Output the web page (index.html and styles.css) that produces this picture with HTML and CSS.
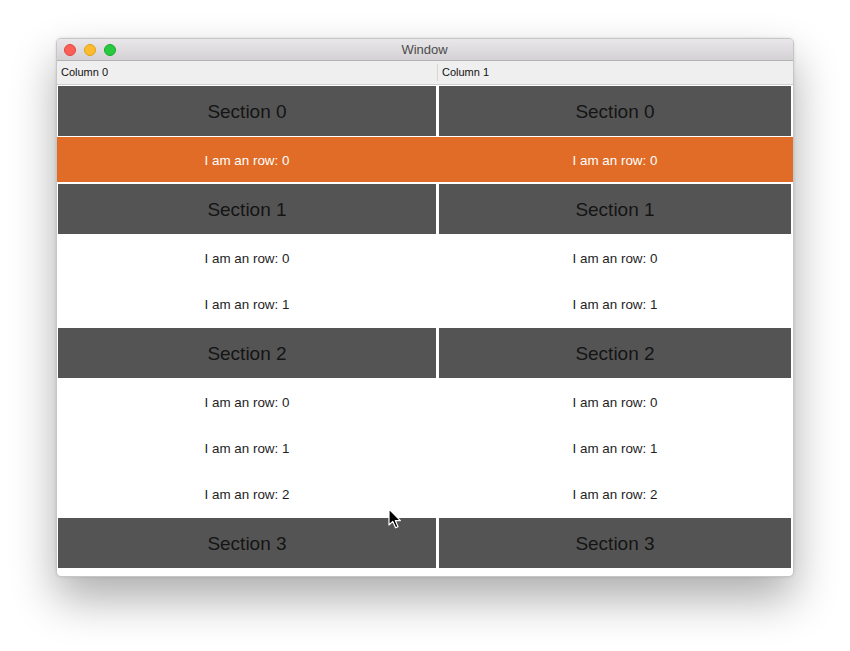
FILE: index.html
```html
<!DOCTYPE html>
<html>
<head>
<meta charset="utf-8">
<link rel="stylesheet" href="styles.css">
</head>
<body>
<div class="window">
  <div class="titlebar">
    <div class="lights">
      <span class="light red"></span>
      <span class="light yellow"></span>
      <span class="light green"></span>
    </div>
    <div class="title">Window</div>
  </div>
  <div class="header">
    <div class="hcell c0">Column 0</div>
    <div class="hcell c1">Column 1</div>
  </div>
  <div class="content">
    <div class="section"><div class="scell c0">Section 0</div><div class="scell c1">Section 0</div></div>
    <div class="row selected"><div class="rcell c0">I am an row: 0</div><div class="rcell c1">I am an row: 0</div></div>
    <div class="section"><div class="scell c0">Section 1</div><div class="scell c1">Section 1</div></div>
    <div class="row"><div class="rcell c0">I am an row: 0</div><div class="rcell c1">I am an row: 0</div></div>
    <div class="row"><div class="rcell c0">I am an row: 1</div><div class="rcell c1">I am an row: 1</div></div>
    <div class="section"><div class="scell c0">Section 2</div><div class="scell c1">Section 2</div></div>
    <div class="row"><div class="rcell c0">I am an row: 0</div><div class="rcell c1">I am an row: 0</div></div>
    <div class="row"><div class="rcell c0">I am an row: 1</div><div class="rcell c1">I am an row: 1</div></div>
    <div class="row"><div class="rcell c0">I am an row: 2</div><div class="rcell c1">I am an row: 2</div></div>
    <div class="section"><div class="scell c0">Section 3</div><div class="scell c1">Section 3</div></div>
  </div>
  <svg class="cursor" width="14" height="22" viewBox="0 0 14 22">
    <path d="M1 1 L1 17 L4.8 13.4 L7.6 19.8 L10 18.8 L7.3 12.6 L12.4 12.6 Z" fill="#000" stroke="#fff" stroke-width="1.2" stroke-linejoin="round"/>
  </svg>
</div>
</body>
</html>
```
FILE: styles.css
```css
html, body {
  margin: 0;
  padding: 0;
  background: #ffffff;
}
body {
  font-family: "Liberation Sans", Arial, sans-serif;
  width: 850px;
  height: 651px;
  overflow: hidden;
}
.window {
  position: relative;
  margin: 38px 0 0 56px;
  width: 736px;
  border: 1px solid #c6c6c6;
  border-radius: 5px;
  background: #ffffff;
  box-shadow: 0 22px 45px rgba(0, 0, 0, 0.32), 0 0 3px rgba(0, 0, 0, 0.12);
  overflow: hidden;
}
.titlebar {
  height: 21px;
  border-bottom: 1px solid #b4b4b4;
  background: linear-gradient(#e9e7e9, #d3d1d3);
  display: flex;
  align-items: center;
  position: relative;
}
.lights {
  display: flex;
  gap: 8px;
  padding-left: 7px;
}
.light {
  width: 12px;
  height: 12px;
  border-radius: 50%;
  box-sizing: border-box;
}
.red { background: #fc5f57; border: 0.5px solid #e2463f; }
.yellow { background: #fdbc2e; border: 0.5px solid #e1a116; }
.green { background: #28c840; border: 0.5px solid #17ad2a; }
.title {
  flex: 1;
  text-align: center;
  margin-left: -60px;
  font-size: 13px;
  color: #4c4c4c;
}
.header {
  height: 23px;
  border-bottom: 1px solid #cfcfcf;
  background: #efefef;
  display: flex;
  align-items: center;
  font-size: 11px;
  color: #111;
}
.hcell {
  height: 100%;
  display: flex;
  align-items: center;
  box-sizing: border-box;
  padding-bottom: 2px;
}
.hcell.c0 {
  width: 380px;
  padding-left: 4px;
}
.hcell.c1 {
  flex: 1;
  padding-left: 4px;
  border-left: 1px solid #d6d6d6;
  height: 17px;
  padding-bottom: 0;
  margin-bottom: 1px;
}
.content {
  padding-bottom: 7px;
}
.section {
  display: flex;
  height: 52px;
  padding: 1px 0;
  box-sizing: border-box;
}
.scell {
  background: #545454;
  color: #141414;
  font-size: 19px;
  display: flex;
  align-items: center;
  justify-content: center;
  padding-top: 1px;
  box-sizing: border-box;
}
.scell.c0 {
  width: 378px;
  margin: 0 1px;
}
.scell.c1 {
  flex: 1;
  margin: 0 2px;
}
.row {
  display: flex;
  height: 46px;
  font-size: 13.4px;
  color: #1e1e1e;
}
.row.selected {
  background: #e06c27;
  color: #ffffff;
  border-bottom: 1px solid #ffffff;
  height: 45px;
}
.row.selected .rcell {
  padding-top: 1px;
}
.rcell {
  display: flex;
  align-items: center;
  justify-content: center;
}
.rcell.c0 {
  width: 380px;
}
.rcell.c1 {
  flex: 1;
}
.cursor {
  position: absolute;
  left: 331px;
  top: 469px;
}
```
